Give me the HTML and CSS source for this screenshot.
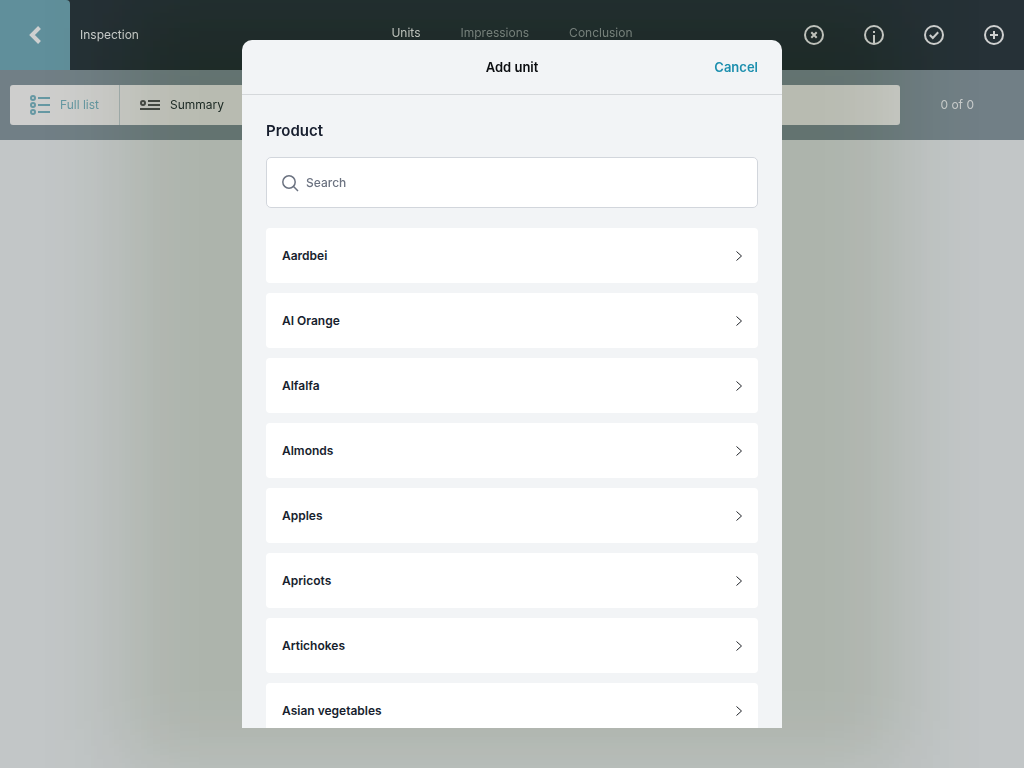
FILE: index.html
```html
<!doctype html>
<html lang="en">
<head>
<meta charset="UTF-8">
<meta name="viewport" content="width=device-width, initial-scale=1">
<title>Inspection</title>
<link rel="stylesheet" href="styles.css">
</head>

<body>
<div class="page">
    <header class="header">
        <div class="headerLeft">
            <button class="back" aria-label="Back">
                <svg width="14" height="20" viewBox="0 0 14 20"><path d="M11.500 2.500L4 10l7.500 7.500" fill="none" stroke="currentColor" stroke-width="4"/></svg>
            </button>
            <span>Inspection</span>
        </div>
        <nav class="tabs">
            <a class="tab tabActive" href="#units">Units</a>
            <a class="tab" href="#impressions">Impressions</a>
            <a class="tab" href="#conclusion">Conclusion</a>
        </nav>
        <div class="actions">
            <button class="action" aria-label="Close">
                <svg width="22" height="22" viewBox="0 0 22 22"><circle cx="11" cy="11" r="9"/><path d="M8.300 8.300l5.400 5.400M13.700 8.300l-5.400 5.400"/></svg>
            </button>
            <button class="action" aria-label="Info">
                <svg width="22" height="22" viewBox="0 0 22 22"><circle cx="11" cy="11" r="9"/><path d="M11 7v2M11 11v9"/></svg>
            </button>
            <button class="action" aria-label="Approve">
                <svg width="22" height="22" viewBox="0 0 22 22"><circle cx="11" cy="11" r="9"/><path d="M6.800 11l3 3 5.400-5.800"/></svg>
            </button>
            <button class="action" aria-label="Add">
                <svg width="22" height="22" viewBox="0 0 22 22"><circle cx="11" cy="11" r="9"/><path d="M11 7v8M7 11h8"/></svg>
            </button>
        </div>
    </header>
    <div class="toolbar">
        <div class="views">
            <button class="view viewActive">
                <svg width="20" height="20" viewBox="0 0 20 20" fill="none" stroke="currentColor" stroke-width="2"><circle cx="3" cy="3" r="2"/><circle cx="3" cy="10" r="2"/><circle cx="3" cy="17" r="2"/><path d="M8 3h12M8 10h12M8 17h12"/></svg>
                Full list
            </button>
            <button class="view">
                <svg width="20" height="20" viewBox="0 0 20 20" fill="none" stroke="#4b4e4e" stroke-width="2"><circle cx="3" cy="8" r="2"/><path d="M8 6h12M8 10h12M0 14h20"/></svg>
                Summary
            </button>
        </div>
        <span class="count">0 of 0</span>
    </div>
    <div class="shadow"></div>
    <div class="shadow shadowTint"></div>
</div>

<div class="overlay">
    <section class="modal" role="dialog" aria-labelledby="modalTitle">
        <div class="modalHeader">
            <h1 class="modalTitle" id="modalTitle">Add unit</h1>
            <button class="cancel">Cancel</button>
        </div>
        <div class="modalBody">
            <h2 class="label"><label for="search">Product</label></h2>
            <div class="search">
                <svg width="18" height="18" viewBox="0 0 18 18" fill="none" stroke="currentColor" stroke-width="1.500"><circle cx="8" cy="8" r="6.200"/><path d="M12.300 12.300l4.700 4.700"/></svg>
                <input class="searchInput" id="search" type="text" placeholder="Search">
            </div>
            <div class="list">
                <button class="item">Aardbei<svg class="chevron" viewBox="0 0 6 10"><path d="M.5.5L5.500 5l-5 4.500"/></svg></button>
                <button class="item">AI Orange<svg class="chevron" viewBox="0 0 6 10"><path d="M.5.5L5.500 5l-5 4.500"/></svg></button>
                <button class="item">Alfalfa<svg class="chevron" viewBox="0 0 6 10"><path d="M.5.5L5.500 5l-5 4.500"/></svg></button>
                <button class="item">Almonds<svg class="chevron" viewBox="0 0 6 10"><path d="M.5.5L5.500 5l-5 4.500"/></svg></button>
                <button class="item">Apples<svg class="chevron" viewBox="0 0 6 10"><path d="M.5.5L5.500 5l-5 4.500"/></svg></button>
                <button class="item">Apricots<svg class="chevron" viewBox="0 0 6 10"><path d="M.5.5L5.500 5l-5 4.500"/></svg></button>
                <button class="item">Artichokes<svg class="chevron" viewBox="0 0 6 10"><path d="M.5.5L5.500 5l-5 4.500"/></svg></button>
                <button class="item">Asian vegetables<svg class="chevron" viewBox="0 0 6 10"><path d="M.5.5L5.500 5l-5 4.500"/></svg></button>
            </div>
        </div>
    </section>
</div>
</body>
</html>
```

FILE: styles.css
```css
*,
*:after,
*:before {
    box-sizing: border-box;
}
body {
    font-family: Inter, "Liberation Sans", sans-serif;
    font-size: 12px;
    line-height: 20px;
    margin: 0;
    overflow: hidden;
}
button {
    background: none;
    border: 0;
    color: inherit;
    cursor: pointer;
    font: inherit;
    margin: 0;
    padding: 0;
}
svg {
    display: block;
    flex: none;
}
.page {
    background: #c2c6c7;
    isolation: isolate;
    min-height: 100vh;
    overflow: hidden;
    position: relative;
}
.header {
    background: #263137;
    color: #cdd0d0;
    display: grid;
    grid-template-columns: 1fr auto 1fr;
    height: 70px;
}
.headerLeft {
    align-items: center;
    display: flex;
    gap: 10px;
}
.back {
    align-items: center;
    background: #608f9b;
    border-radius: 0 4px 0 0;
    color: #cfd0d0;
    display: flex;
    height: 70px;
    justify-content: center;
    width: 70px;
}
.tabs {
    align-items: center;
    display: flex;
    gap: 40px;
    padding-bottom: 5px;
}
.tab {
    color: #828b8c;
    text-decoration: none;
}
.tabActive {
    color: #cdd0d0;
}
.actions {
    display: flex;
    justify-content: flex-end;
}
.action {
    align-items: center;
    display: flex;
    justify-content: center;
    width: 60px;
}
.action svg {
    fill: none;
    stroke: #cfd0d0;
    stroke-width: 2;
}
.toolbar {
    align-items: center;
    background: #717f86;
    display: flex;
    height: 70px;
    padding-left: 10px;
}
.views {
    background: #cececd;
    border-radius: 3px;
    display: flex;
    flex: 1;
    height: 40px;
}
.view {
    align-items: center;
    color: #263235;
    display: flex;
    gap: 10px;
    padding: 0 20px;
}
.viewActive {
    border-right: 1px solid #a5b0b2;
    color: #6698a3;
}
.count {
    color: #c9cccc;
    padding: 0 50px 0 40px;
}
/* soft shadow around the dialog, wider at the sides */
.shadow {
    background: rgba(0, 0, 0, 0.08);
    bottom: 0;
    filter: blur(42px);
    left: calc(50% - 390px);
    position: absolute;
    top: 0;
    width: 780px;
}
.shadowTint {
    background: #05020b;
    mix-blend-mode: difference;
}
.overlay {
    display: flex;
    inset: 0;
    justify-content: center;
    padding: 40px 0;
    position: fixed;
}
.modal {
    background: #f2f4f6;
    border-radius: 10px 10px 0 0;
    max-width: 540px;
    overflow: hidden;
    width: 100%;
}
.modalHeader {
    align-items: center;
    border-bottom: 1px solid #d5d8db;
    display: grid;
    grid-template-columns: 1fr auto 1fr;
    height: 55px;
    padding: 0 24px;
}
.modalTitle {
    color: #0b0d10;
    font-size: 13px;
    font-weight: 600;
    grid-column: 2;
    margin: 0;
}
.cancel {
    color: #1d8fae;
    font-size: 13px;
    font-weight: 600;
    justify-self: end;
}
.modalBody {
    padding: 24px;
}
.label {
    color: #171e2e;
    font-size: 15px;
    font-weight: 600;
    line-height: 24px;
    margin: 0 0 14px;
}
.search {
    align-items: center;
    background: #fff;
    border: 1px solid #d2d6dc;
    border-radius: 5px;
    color: #6b7280;
    display: flex;
    gap: 7px;
    height: 51px;
    margin-bottom: 20px;
    padding: 0 14px;
}
.searchInput {
    background: none;
    border: 0;
    color: #171e2e;
    flex: 1;
    font: inherit;
    font-weight: 500;
    min-width: 0;
    outline: 0;
    padding: 0;
}
.searchInput::placeholder {
    color: #6b7280;
    opacity: 1;
}
.list {
    display: flex;
    flex-direction: column;
    gap: 10px;
}
.item {
    align-items: center;
    background: #fff;
    border-radius: 4px;
    color: #171e2e;
    display: flex;
    font-weight: 600;
    height: 55px;
    justify-content: space-between;
    padding: 0 16px;
}
.chevron {
    fill: none;
    height: 10px;
    stroke: #202329;
    width: 6px;
}
```
